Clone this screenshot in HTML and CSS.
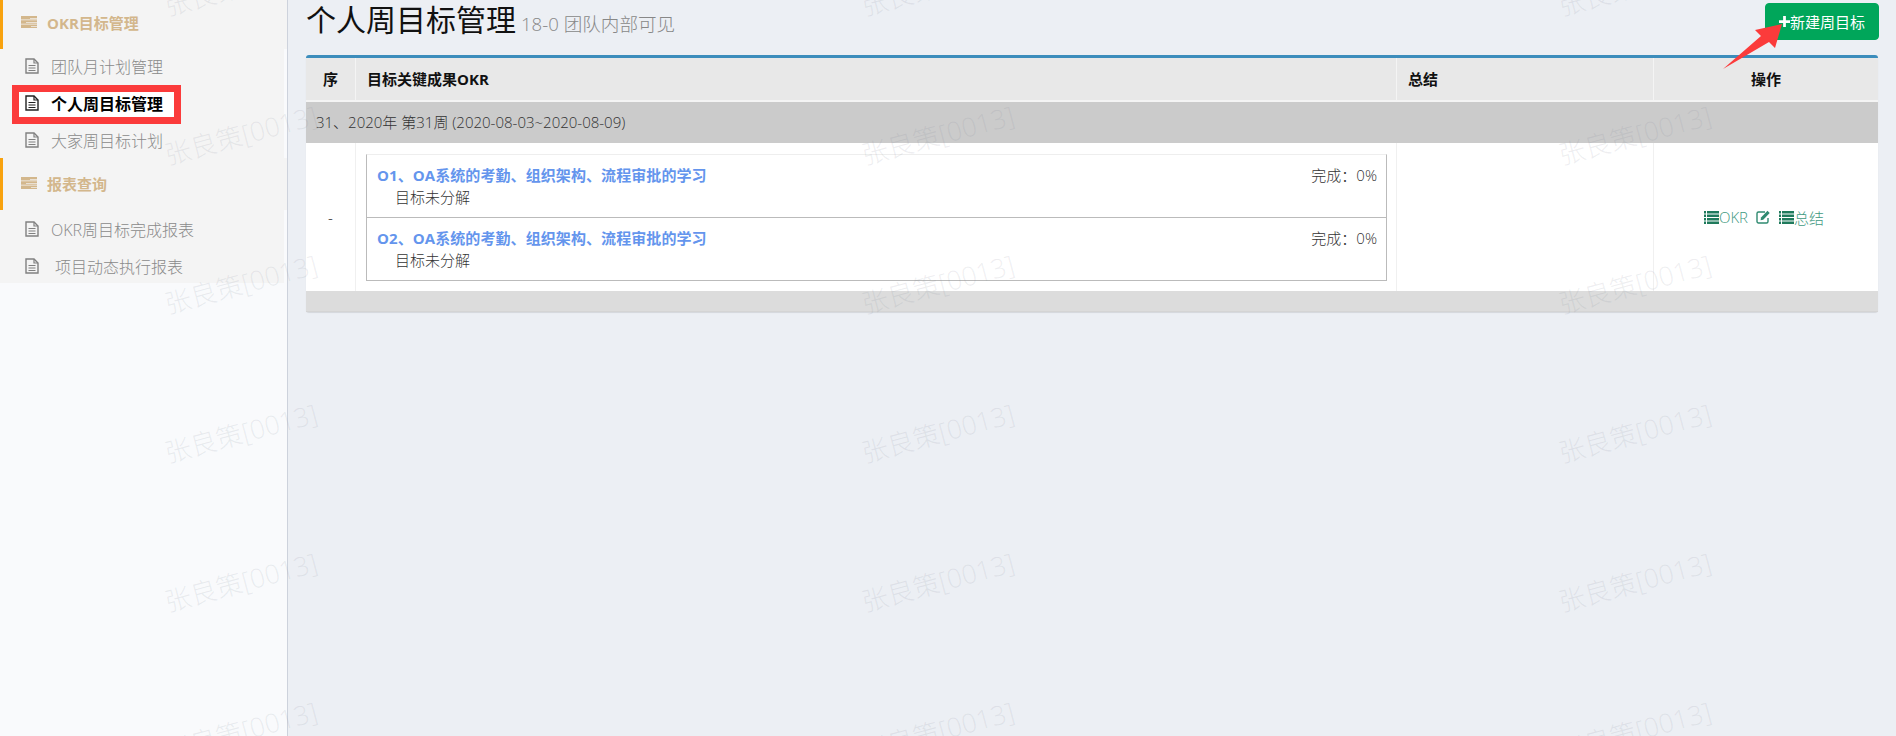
FILE: index.html
```html
<!DOCTYPE html>
<html lang="zh-CN">
<head>
<meta charset="utf-8">
<title>个人周目标管理</title>
<link rel="stylesheet" href="styles.css">
</head>
<body>
<svg class="defs" width="0" height="0" aria-hidden="true">
  <symbol id="i-file" viewBox="0 0 14 16">
    <path d="M1 1h8l4 4v10H1z" fill="none" stroke="currentColor" stroke-width="1.4"/>
    <path d="M9 1v4h4" fill="none" stroke="currentColor" stroke-width="1.2"/>
    <path d="M3.500 7.500h7M3.500 10h7M3.500 12.500h7" stroke="currentColor" stroke-width="1.2"/>
  </symbol>
  <symbol id="i-tasks" viewBox="0 0 16 12">
    <path d="M0 0h16v3.600H0zM0 4.200h16v3.600H0zM0 8.400h16V12H0z" fill="currentColor"/>
    <path d="M9 2.500h7M5 6.500h11M10 10.500h6" stroke="#f4f4f4" stroke-width=".7"/>
  </symbol>
  <symbol id="i-list" viewBox="0 0 15 13">
    <path d="M0 0h2v2.400H0zM0 3.500h2v2.400H0zM0 7h2v2.400H0zM0 10.500h2v2.400H0zM3 0h12v2.400H3zM3 3.500h12v2.400H3zM3 7h12v2.400H3zM3 10.500h12v2.400H3z" fill="currentColor"/>
  </symbol>
</svg>
<div class="page">
  <aside class="sidebar">
    <div class="menu">
      <div class="sec sec-first"><svg class="sec-ico"><use href="#i-tasks"/></svg><span>OKR目标管理</span></div>
      <ul class="items items-first">
        <li class="item"><svg class="file-ico"><use href="#i-file"/></svg>团队月计划管理</li>
        <li class="item item-on"><svg class="file-ico"><use href="#i-file"/></svg>个人周目标管理</li>
        <li class="item"><svg class="file-ico"><use href="#i-file"/></svg>大家周目标计划</li>
      </ul>
      <div class="sec"><svg class="sec-ico"><use href="#i-tasks"/></svg><span>报表查询</span></div>
      <ul class="items items-last">
        <li class="item"><svg class="file-ico"><use href="#i-file"/></svg>OKR周目标完成报表</li>
        <li class="item"><svg class="file-ico"><use href="#i-file"/></svg><span class="indent">项目动态执行报表</span></li>
      </ul>
    </div>
  </aside>
  <main class="main">
    <header class="head">
      <h1 class="title">个人周目标管理<small class="sub">18-0 团队内部可见</small></h1>
      <button class="add" type="button"><svg class="plus" viewBox="0 0 12 12"><path d="M4.500 0h3v4.500H12v3H7.500V12h-3V7.500H0v-3h4.500z" fill="currentColor"/></svg>新建周目标</button>
    </header>
    <section class="panel">
      <div class="row row-head">
        <div class="cell c-no">序</div>
        <div class="cell c-okr">目标关键成果OKR</div>
        <div class="cell c-sum">总结</div>
        <div class="cell c-op">操作</div>
      </div>
      <div class="group">31、2020年 第31周 (2020-08-03~2020-08-09)</div>
      <div class="row row-body">
        <div class="cell c-no c-mid">-</div>
        <div class="cell c-okr c-box">
          <div class="box">
            <div class="obj">
              <div class="obj-top"><a class="obj-name">O1、OA系统的考勤、组织架构、流程审批的学习</a><span class="done">完成：0%</span></div>
              <div class="obj-note">目标未分解</div>
            </div>
            <div class="obj">
              <div class="obj-top"><a class="obj-name">O2、OA系统的考勤、组织架构、流程审批的学习</a><span class="done">完成：0%</span></div>
              <div class="obj-note">目标未分解</div>
            </div>
          </div>
        </div>
        <div class="cell c-sum"></div>
        <div class="cell c-op c-mid ops">
          <span class="op"><svg class="list-ico"><use href="#i-list"/></svg>OKR</span>
          <svg class="edit-ico" viewBox="0 0 15 14"><path d="M12 8v3.500a1.500 1.500 0 0 1-1.500 1.500h-8A1.500 1.500 0 0 1 1 11.500v-8A1.500 1.500 0 0 1 2.500 2H9" fill="none" stroke="currentColor" stroke-width="1.400"/><path d="M5 7.500 11.500.8l2.200 2.200L7.200 9.700 4.600 10.200z" fill="currentColor"/></svg>
          <span class="op"><svg class="list-ico"><use href="#i-list"/></svg>总结</span>
        </div>
      </div>
      <div class="foot"></div>
    </section>
  </main>

  <div class="note-box"></div>
  <svg class="arrow" viewBox="0 0 59 45"><path d="M0 45 38 12 32 6 59 0 52 24 46 18z" fill="#fb3b3b"/></svg>

  <div class="wm wm-a1">张良策[0013]</div>
  <div class="wm wm-a2">张良策[0013]</div>
  <div class="wm wm-a3">张良策[0013]</div>
  <div class="wm wm-a4">张良策[0013]</div>
  <div class="wm wm-a5">张良策[0013]</div>
  <div class="wm wm-a6">张良策[0013]</div>
  <div class="wm wm-b1">张良策[0013]</div>
  <div class="wm wm-b2">张良策[0013]</div>
  <div class="wm wm-b3">张良策[0013]</div>
  <div class="wm wm-b4">张良策[0013]</div>
  <div class="wm wm-b5">张良策[0013]</div>
  <div class="wm wm-b6">张良策[0013]</div>
  <div class="wm wm-c1">张良策[0013]</div>
  <div class="wm wm-c2">张良策[0013]</div>
  <div class="wm wm-c3">张良策[0013]</div>
  <div class="wm wm-c4">张良策[0013]</div>
  <div class="wm wm-c5">张良策[0013]</div>
  <div class="wm wm-c6">张良策[0013]</div>
</div>
</body>
</html>
```
FILE: styles.css
```css
* { box-sizing: border-box; }
html, body { margin: 0; padding: 0; }
body {
  font-family: "Open Sans", "Noto Sans CJK SC", sans-serif;
  font-size: 15px;
  font-weight: 300;
  color: #333;
}
.defs { position: absolute; }
.page {
  position: relative;
  display: flex;
  width: 1896px;
  height: 736px;
  overflow: hidden;
  background: #eceff4;
}

/* sidebar */
.sidebar {
  flex: none;
  width: 288px;
  background: #f9fafc;
  border-right: 1px solid #cdd2dc;
}
.menu { height: 283px; }
.sec {
  display: flex;
  align-items: center;
  height: 52px;
  padding: 0 0 2px 18px;
  border-left: 3px solid #f8a20e;
  background: #f4f4f4;
  font-weight: 700;
  color: #d3b78c;
}
.sec-first { height: 49px; padding-bottom: 5px; }
.sec span { margin-left: 10px; }
.sec-ico { width: 16px; height: 12px; }
.items { list-style: none; margin: 0; padding: 0; width: 284px; background: #f4f4f4; }
.items-first { height: 109px; }
.items-last { height: 73px; padding-top: 2px; }
.item {
  display: flex;
  align-items: center;
  height: 37px;
  padding: 0 0 3px 25px;
  font-size: 16px;
  color: #8a8a8a;
}
.file-ico { flex: none; width: 14px; height: 16px; margin-right: 12px; color: #808080; }
.item-on { position: relative; z-index: 2; color: #000; font-weight: 700; }
.item-on .file-ico { color: #222; }
.indent { margin-left: 4px; }

/* main */
.main { flex: 1; padding: 0 18px; }
.head { display: flex; justify-content: space-between; height: 55px; }
.title { margin: 0; font-size: 30px; font-weight: 400; line-height: 40px; color: #111; }
.sub { margin-left: 5px; font-size: 18.6px; font-weight: 300; color: #888; }
.add {
  display: flex;
  align-items: center;
  width: 114px;
  height: 37px;
  margin: 3px -1px 0 0;
  padding: 0 0 0 13px;
  border: 1px solid #00a65a;
  border-radius: 4px;
  background: #00a65a;
  color: #fff;
  font: inherit;
  font-weight: 400;
}
.plus { position: relative; z-index: 4; width: 11px; height: 11px; }

.panel {
  border-top: 3px solid #3c8dbc;
  border-radius: 3px;
  background: #fff;
  box-shadow: 0 1px 1px rgba(0, 0, 0, .1);
}
.row { display: flex; }
.cell { border-right: 1px solid #f0f0f0; }
.c-no { flex: none; width: 50px; text-align: center; }
.c-okr { flex: none; width: 1041px; padding-left: 11px; }
.c-sum { flex: none; width: 257px; padding-left: 11px; }
.c-op { flex: none; width: 224px; text-align: center; border-right: 0; }
.row-head {
  height: 44px;
  border-bottom: 2px solid #f4f4f4;
  background: #e8e8e8;
  font-weight: 700;
  color: #111;
  line-height: 42px;
}
.row-head .cell { border-right-color: #f4f4f4; }
.group {
  height: 41px;
  padding-left: 10px;
  background: #cbcbcb;
  line-height: 41px;
}
.row-body { height: 148px; }
.c-mid { display: flex; align-items: center; justify-content: center; color: #111; }
.c-box { padding: 11px 9px 0 10px; }
.box {
  height: 127px;
  border: 1px solid #bbb;
  border-top-color: #eee;
}
.obj { height: 63px; padding: 10px 9px 0 10px; line-height: 20px; }
.obj:first-child { height: 62px; }
.obj + .obj { border-top: 1px solid #bbb; }
.obj-top { display: flex; justify-content: space-between; }
.obj-name { font-weight: 700; color: #6495ed; letter-spacing: .08px; }
.done { color: #333; }
.obj-note { margin: 2px 0 0 18px; color: #333; }
.ops { gap: 8px; padding-right: 4px; color: #3f9a82; font-size: 15px; }
.op { display: flex; align-items: center; }
.list-ico { width: 15px; height: 13px; color: #1f7a5c; }
.edit-ico { width: 15px; height: 14px; color: #2f8a70; }
.foot { height: 21px; background: #dcdcdc; border-bottom: 1px solid #d4d4d4; }

/* annotations over the screenshot */
.note-box {
  position: absolute;
  left: 12px;
  top: 85px;
  width: 169px;
  height: 39px;
  border: 7px solid #fb3b3b;
  background: #fff;
  z-index: 1;
}
.arrow { position: absolute; left: 1723px; top: 24px; width: 59px; height: 45px; z-index: 3; }

/* watermark */
.wm {
  position: absolute;
  z-index: 5;
  width: 180px;
  font-size: 26.5px;
  line-height: 32px;
  white-space: nowrap;
  color: rgba(120, 125, 140, .13);
  transform: rotate(-15deg);
  pointer-events: none;
}
.wm-a1, .wm-a2, .wm-a3, .wm-a4, .wm-a5, .wm-a6 { left: 162px; }
.wm-b1, .wm-b2, .wm-b3, .wm-b4, .wm-b5, .wm-b6 { left: 859px; }
.wm-c1, .wm-c2, .wm-c3, .wm-c4, .wm-c5, .wm-c6 { left: 1556px; }
.wm-a1, .wm-b1, .wm-c1 { top: -33px; }
.wm-a2, .wm-b2, .wm-c2 { top: 116px; }
.wm-a3, .wm-b3, .wm-c3 { top: 265px; }
.wm-a4, .wm-b4, .wm-c4 { top: 414px; }
.wm-a5, .wm-b5, .wm-c5 { top: 563px; }
.wm-a6, .wm-b6, .wm-c6 { top: 712px; }
```
